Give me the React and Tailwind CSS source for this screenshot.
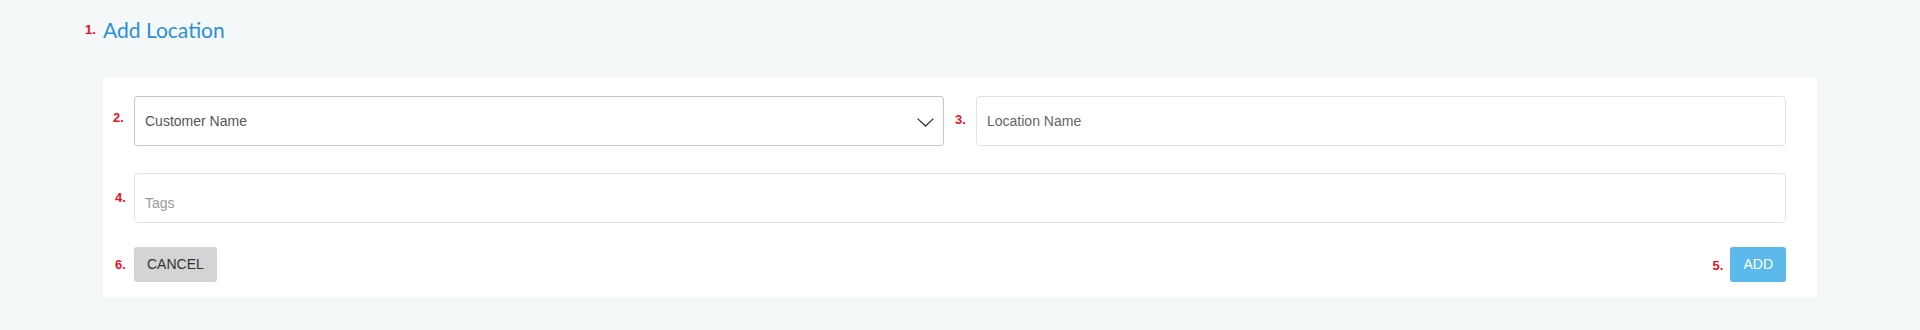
import React from "react";

function Marker({ children, className = "" }) {
  return (
    <span
      className={
        "shrink-0 text-[13px] leading-none font-bold text-[#ee1026] " + className
      }
      style={{ fontFamily: '"Liberation Sans", Arial, sans-serif' }}
    >
      {children}
    </span>
  );
}

export default function App() {
  const sans = { fontFamily: '"Liberation Sans", Arial, sans-serif' };
  return (
    <div className="w-full h-[330px] bg-[#f5f8f9] pt-[15px]">
      <div className="flex items-start pl-[85px] pb-[32px]">
        <Marker className="w-[18px] pt-[8px]">1.</Marker>
        <h1
          className="text-[21px] leading-[30px] font-normal text-[#2b8fdb]"
          style={{ fontFamily: 'Lato, "Open Sans", sans-serif' }}
        >
          Add Location
        </h1>
      </div>

      <div
        className="mx-[103px] bg-white h-[220px] pl-[10px] pr-[31px] pt-[19px] pb-[15px] flex flex-col"
        style={sans}
      >
        <div className="grid grid-cols-[21px_1fr_32px_1fr] items-start">
          <Marker className="pt-[15px]">2.</Marker>
          <div
            role="combobox"
            className="h-[50px] border border-[#c8c8c8] rounded-[3px] flex items-center justify-between pl-[10px] pr-[9px] text-[14px] text-[#555]"
          >
            <span>Customer Name</span>
            <svg width="17" height="9" viewBox="0 0 17 9" className="mt-[3px]">
              <polyline
                points="0.6,0.6 8.5,8 16.4,0.6"
                fill="none"
                stroke="#333"
                strokeWidth="1.3"
              />
            </svg>
          </div>
          <Marker className="pl-[11px] pt-[17px]">3.</Marker>
          <input
            placeholder="Location Name"
            className="w-full min-w-0 h-[50px] border border-[#e1e1e1] rounded-[4px] pl-[10px] text-[14px] outline-none placeholder:text-[#666]"
          />
        </div>

        <div className="flex items-start mt-[27px]">
          <Marker className="w-[21px] pl-[2px] pt-[18px]">4.</Marker>
          <input
            placeholder="Tags"
            className="flex-1 min-w-0 h-[50px] border border-[#e1e1e1] rounded-[4px] pl-[10px] pt-[10px] text-[14px] outline-none placeholder:text-[#9a9a9a]"
          />
        </div>

        <div className="flex items-start justify-between mt-[24px]">
          <div className="flex items-start">
            <Marker className="w-[21px] pl-[2px] pt-[11px]">6.</Marker>
            <button className="h-[35px] px-[13px] rounded-[3px] bg-[#d4d4d4] text-[14px] text-[#333]">
              CANCEL
            </button>
          </div>
          <div className="flex items-start">
            <Marker className="w-[18px] pt-[12px]">5.</Marker>
            <button className="h-[35px] px-[13px] rounded-[3px] bg-[#5bb9ec] text-[14px] text-white">
              ADD
            </button>
          </div>
        </div>
      </div>
    </div>
  );
}
